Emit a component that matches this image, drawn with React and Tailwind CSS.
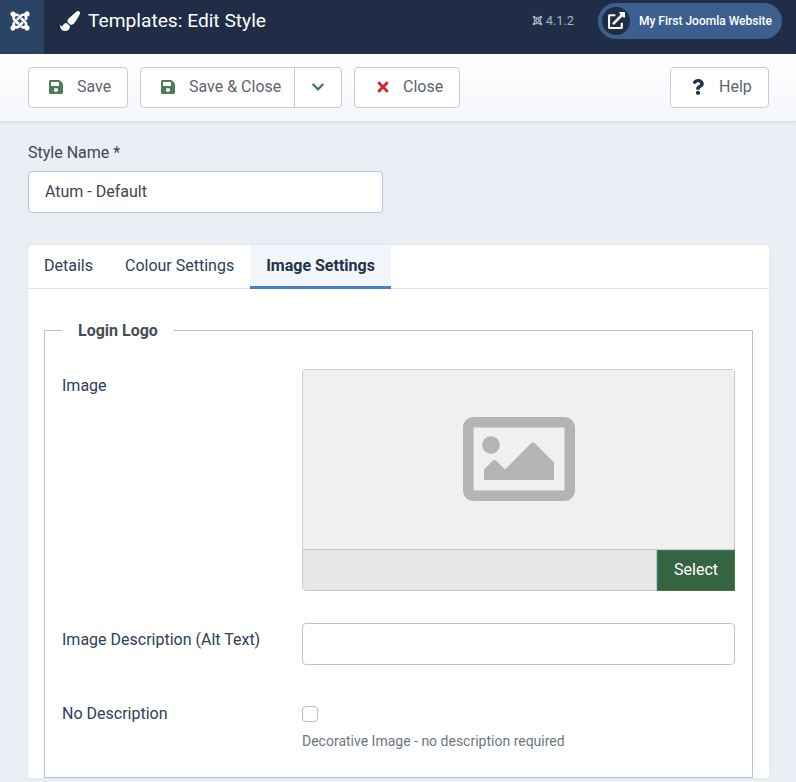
import React from "react";
import { FaJoomla, FaPaintBrush, FaSave, FaTimes, FaQuestion, FaChevronDown, FaExternalLinkAlt, FaRegImage } from "react-icons/fa";

function Btn({ icon, label, gap = "mr-[13px]", className = "" }) {
  return (
    <button className={`h-[41px] flex items-center bg-white border border-[#c5cdd9] rounded-[4px] text-[16px] text-[#5c6470] ${className}`}>
      <span className={`w-4 flex justify-center ${gap}`}>{icon}</span>
      {label}
    </button>
  );
}

export default function App() {
  return (
    <div className="w-[796px] h-[782px] overflow-hidden bg-[#ebeff5] font-['Roboto',sans-serif] text-[16px] text-[#2f3b50]">
      <header className="h-[54px] bg-[#1f2e46] flex items-center text-white">
        <div className="w-[44px] h-full bg-[#2b4466] flex items-center pl-[9px]">
          <FaJoomla className="w-[22px] h-[22px] mb-[13px]" />
        </div>
        <div className="flex items-center ml-[16px] mb-[13px]">
          <FaPaintBrush className="w-[20px] h-[20px] mr-[8px]" />
          <span className="text-[19.2px] leading-[28px]">Templates: Edit Style</span>
        </div>
        <div className="ml-auto flex items-center mb-[13px] text-[#aab4c2] text-[12.8px]">
          <FaJoomla className="w-[11px] h-[11px] mr-[3px]" />
          4.1.2
        </div>
        <div className="ml-[24px] mr-[14px] mb-[13px] w-[184px] h-[36px] rounded-full bg-[#3c5f90] flex items-center pl-[4px]">
          <span className="w-[28px] h-[28px] rounded-full bg-[#1f2e46] flex items-center justify-center">
            <FaExternalLinkAlt className="w-[17px] h-[17px]" />
          </span>
          <span className="ml-[9px] text-[12px] font-medium whitespace-nowrap">My First Joomla Website</span>
        </div>
      </header>

      <div className="h-[67px] bg-gradient-to-b from-white to-[#f4f6fa] shadow-[0_1px_4px_rgba(120,140,170,0.25)] flex items-center px-[28px] pb-[1px]">
        <Btn className="w-[100px] pl-[19px]" icon={<FaSave className="w-[16px] h-[16px] text-[#4b7f5b]" />} label="Save" />
        <div className="ml-[12px] h-[41px] w-[202px] flex bg-white border border-[#c5cdd9] rounded-[4px] text-[#5c6470]">
          <div className="w-[154px] flex items-center pl-[19px] border-r border-[#c5cdd9]">
            <span className="w-4 flex justify-center mr-[13px]">
              <FaSave className="w-[16px] h-[16px] text-[#4b7f5b]" />
            </span>
            Save &amp; Close
          </div>
          <div className="flex-1 flex items-center justify-center">
            <FaChevronDown className="w-[14px] h-[14px] text-[#40785a]" />
          </div>
        </div>
        <Btn className="ml-[12px] w-[106px] pl-[20px]" gap="mr-[12px]" icon={<FaTimes className="w-[16px] h-[16px] text-[#d0282e]" />} label="Close" />
        <Btn className="ml-auto -mr-px w-[99px] pl-[19px]" gap="mr-[13px]" icon={<FaQuestion className="w-[16px] h-[16px] text-[#233149]" />} label="Help" />
      </div>

      <main className="px-[28px]">
        <label className="block mt-[22px] leading-[20px] text-[#3d4652]">Style Name *</label>
        <div className="mt-[8px] w-[355px] h-[42px] bg-white border border-[#b2c5de] rounded-[4px] pl-[16px] flex items-center text-[#3d4652]">
          Atum - Default
        </div>

        <section className="mt-[32px] bg-white rounded-t-[4px] w-[741px] shadow-[0_0_4px_rgba(120,140,170,0.12)]">
          <nav className="h-[44px] flex border-b border-[#dae4f0]">
            <div className="px-[16px] pb-[2px] h-[43px] flex items-center text-[#2f4059]">Details</div>
            <div className="px-[16px] pb-[2px] h-[43px] flex items-center text-[#2f4059]">Colour Settings</div>
            <div className="px-[16px] h-[44px] flex items-center font-bold text-[#22324b] bg-[#f2f5f9] border-b-[3px] border-[#4f7dbc] -mb-px">Image Settings</div>
          </nav>

          <div className="px-[16px] pt-[30px]">
            <fieldset className="border border-[#b2c5de] px-[17px] h-[459px]">
              <legend className="px-[16px] pt-[2px] font-bold text-[#474c55] leading-[20px]">Login Logo</legend>

              <div className="flex mt-[28px]">
                <div className="w-[240px] leading-[20px] pt-[7px] text-[#2f4059]">Image</div>
                <div className="w-[433px] h-[222px] border-l border-t border-[#c9cdd2] rounded-t-[4px] rounded-bl-[4px] overflow-hidden flex flex-col">
                  <div className="h-[180px] pb-[2px] bg-[#f0f0f0] flex items-center justify-center border-b border-r border-[#c4c8cc]">
                    <FaRegImage className="w-[112px] h-[112px] text-[#b4b4b4]" />
                  </div>
                  <div className="flex-1 flex bg-[#e7e7e7]">
                    <div className="flex-1 border-r border-b border-[#b2c5de]" />
                    <div className="w-[78px] pb-[2px] bg-[#366340] border border-[#40784f] text-white flex items-center justify-center">Select</div>
                  </div>
                </div>
              </div>

              <div className="flex mt-[32px]">
                <div className="w-[240px] leading-[20px] pt-[7px] text-[#2f4059]">Image Description (Alt Text)</div>
                <div className="w-[433px] h-[42px] bg-white border border-[#b2c5de] rounded-[4px]" />
              </div>

              <div className="flex mt-[39px]">
                <div className="w-[240px] leading-[20px] text-[#2f4059]">No Description</div>
                <div className="pt-[2px]">
                  <div className="w-[16px] h-[16px] bg-white border border-[#bcbcbc] rounded-[4px]" />
                  <div className="mt-[9px] text-[14px] leading-[20px] text-[#6c7784]">Decorative Image - no description required</div>
                </div>
              </div>
            </fieldset>
          </div>
        </section>
      </main>
    </div>
  );
}
